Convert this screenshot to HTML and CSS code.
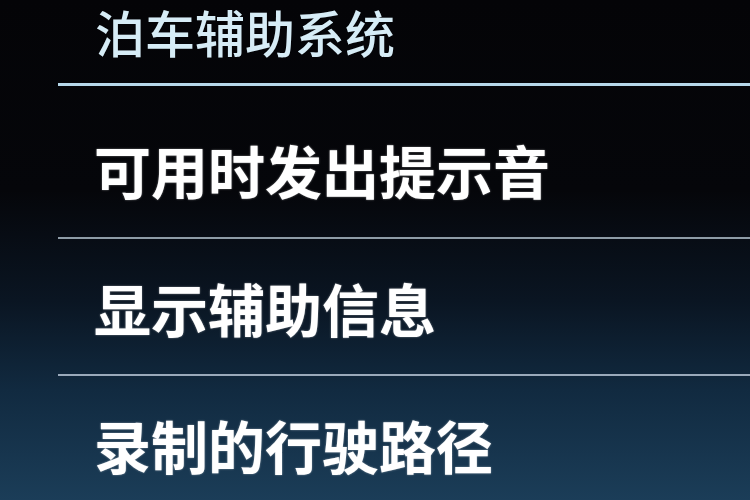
FILE: index.html
```html
<!DOCTYPE html>
<html lang="zh-CN">
<head>
<meta charset="utf-8">
<link rel="stylesheet" href="styles.css">
</head>
<body>
<div class="screen">
  <div class="menu">
    <div class="header">泊车辅助系统</div>
    <div class="row row-first">可用时发出提示音</div>
    <div class="row row-mid">显示辅助信息</div>
    <div class="row row-last">录制的行驶路径</div>
  </div>
</div>
</body>
</html>
```
FILE: styles.css
```css
html, body {
  margin: 0;
  padding: 0;
}
body {
  width: 750px;
  height: 500px;
  overflow: hidden;
  font-family: "Noto Sans CJK SC", "Noto Sans", sans-serif;
}
.screen {
  width: 750px;
  height: 500px;
  background: linear-gradient(180deg, #040407 0%, #05060a 38%, #0a1522 60%, #112a40 78%, #1b3d58 100%);
  display: flex;
  flex-direction: column;
  padding-left: 58px;
  box-sizing: border-box;
}
.menu {
  display: flex;
  flex-direction: column;
}
.header {
  height: 78px;
  padding-top: 5px;
  padding-left: 37px;
  font-size: 50px;
  line-height: 52px;
  font-weight: 500;
  color: #d6ecf6;
  border-bottom: 3px solid #b6d8ea;
}
.row {
  padding-left: 36px;
  font-size: 57px;
  line-height: 68px;
  font-weight: 700;
  color: #ffffff;
  text-shadow: 0 0 2px rgba(255, 255, 255, 0.5);
}
.row-first {
  height: 102px;
  padding-top: 49px;
  border-bottom: 2px solid #8e9ca7;
}
.row-mid {
  height: 101px;
  padding-top: 34px;
  border-bottom: 2px solid #9aaabb;
}
.row-last {
  padding-top: 34px;
}
```
